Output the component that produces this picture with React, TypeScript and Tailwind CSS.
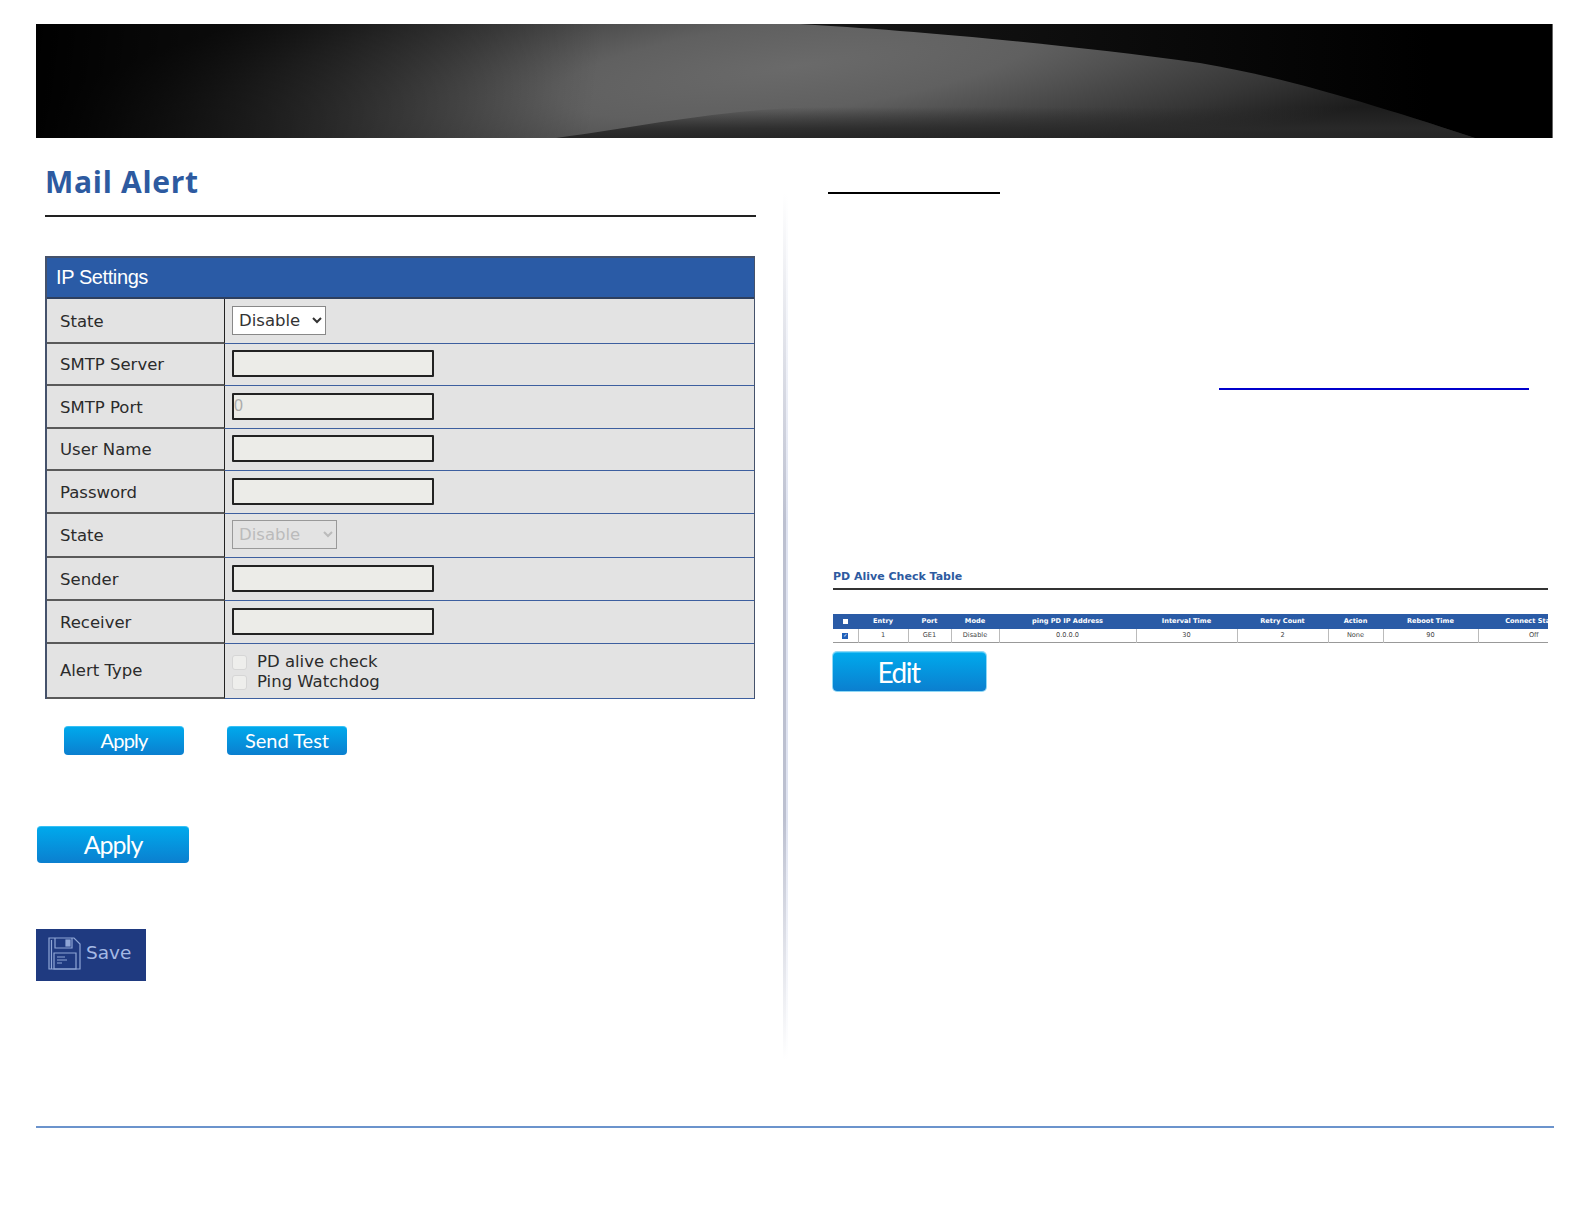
const SANS = "font-['DejaVu_Sans',sans-serif]";

const RULE_ROWS = [
  { label: "State", height: "h-[45px]", kind: "select" },
  { label: "SMTP Server", height: "h-[42px]", kind: "input" },
  { label: "SMTP Port", height: "h-[43px]", kind: "port" },
  { label: "User Name", height: "h-[42px]", kind: "input" },
  { label: "Password", height: "h-[43px]", kind: "input" },
  { label: "State", height: "h-[44px]", kind: "disabled" },
  { label: "Sender", height: "h-[43px]", kind: "input" },
  { label: "Receiver", height: "h-[43px]", kind: "input" },
];

function Banner() {
  return (
    <svg viewBox="0 0 1517 114" className="block h-[114px] w-[1517px]" aria-hidden="true">
      <defs>
        <linearGradient id="base" gradientUnits="userSpaceOnUse" x1="0" x2="1517" y1="0" y2="0">
          <stop offset="0" stopColor="#000" />
          <stop offset="0.12" stopColor="#000" />
          <stop offset="0.5" stopColor="#171717" />
          <stop offset="0.92" stopColor="#000" />
        </linearGradient>
        <radialGradient
          id="glow"
          gradientUnits="userSpaceOnUse"
          cx="0"
          cy="0"
          r="1"
          gradientTransform="translate(760 42) rotate(-7) scale(800 150)"
        >
          <stop offset="0" stopColor="#6a6a6a" />
          <stop offset="0.3" stopColor="#606060" />
          <stop offset="0.55" stopColor="#484848" />
          <stop offset="0.75" stopColor="#363636" />
          <stop offset="0.9" stopColor="#262626" />
          <stop offset="1" stopColor="#1c1c1c" />
        </radialGradient>
        <linearGradient id="shade" gradientUnits="userSpaceOnUse" x1="0" y1="0" x2="560" y2="70">
          <stop offset="0" stopColor="#000" />
          <stop offset="0.2" stopColor="#000" stopOpacity="0.75" />
          <stop offset="0.6" stopColor="#000" stopOpacity="0.35" />
          <stop offset="1" stopColor="#000" stopOpacity="0" />
        </linearGradient>
        <linearGradient id="band" x1="0" x2="0" y1="0" y2="1">
          <stop offset="0" stopColor="#2a2a2a" stopOpacity="0" />
          <stop offset="0.7" stopColor="#2a2a2a" stopOpacity="0.9" />
          <stop offset="1" stopColor="#262626" />
        </linearGradient>
        <clipPath id="frame">
          <rect width="1517" height="114" />
        </clipPath>
        <clipPath id="sweep">
          <path d="M0 0 L764 0 C864 6 1014 18 1164 39 C1240 52 1314 73 1439 114 L0 114 Z" />
        </clipPath>
      </defs>
      <g clipPath="url(#frame)">
        <rect width="1517" height="114" fill="url(#base)" />
        <g clipPath="url(#sweep)">
          <rect width="1517" height="114" fill="url(#glow)" />
          <rect width="600" height="114" fill="url(#shade)" />
          <path d="M520 114 C610 102 680 86 780 83 L1500 83 L1500 114 Z" fill="url(#band)" />
        </g>
        <rect x="1516" width="1" height="114" fill="#666" />
      </g>
    </svg>
  );
}

function BlueButton({ label, size }: { label: string; size: string }) {
  return (
    <button
      className={`flex items-center justify-center rounded-[4px] border-t border-[#35c0f5] bg-gradient-to-b from-[#00a9ec] to-[#0b7fcf] font-['Lato',sans-serif] text-white ${size}`}
    >
      {label}
    </button>
  );
}

function Field({ kind }: { kind: string }) {
  if (kind === "select") {
    return (
      <select className={`${SANS} h-[29px] w-[94px] border border-[#888] bg-white pl-[2px] text-[16.5px] text-[#333]`}>
        <option>Disable</option>
      </select>
    );
  }
  if (kind === "disabled") {
    return (
      <select disabled className={`${SANS} h-[29px] w-[105px] border border-[#999] bg-[#e3e3e3] pl-[2px] text-[16.5px] text-[#bbb]`}>
        <option>Disable</option>
      </select>
    );
  }
  return (
    <input
      readOnly
      value={kind === "port" ? "0" : ""}
      className="h-[27px] w-[202px] rounded-[1px] border-2 border-[#222] bg-[#ecece8] px-0 font-['Liberation_Sans',sans-serif] text-[16px] text-[#aaa]"
    />
  );
}

function SettingsTable() {
  return (
    <div className={`${SANS} ml-[9px] mt-[39px] w-[710px] border-l-2 border-r border-t-2 border-[#45526b] text-[16.5px] text-[#2b2b2b]`}>
      <div className="flex h-[41px] items-center border-b-2 border-[#2d3f5f] bg-[#2a5ba6] pb-[2px] pl-[9px] font-['Liberation_Sans',sans-serif] text-[20px] tracking-[-0.4px] text-white">
        IP Settings
      </div>
      {RULE_ROWS.map((row, i) => (
        <div key={i} className={`flex bg-[#e3e3e3] ${row.height}`}>
          <div className="flex w-[178px] items-center border-b-2 border-r border-[#5a5a5a] border-r-[#222] pl-[13px] pt-[3px]">{row.label}</div>
          <div className="flex flex-1 items-center border-b border-[#3d5f9f] pb-[2px] pl-[7px]">
            <Field kind={row.kind} />
          </div>
        </div>
      ))}
      <div className="flex h-[55px] bg-[#e3e3e3]">
        <div className="flex w-[178px] items-center border-b-2 border-r border-[#5a5a5a] border-r-[#222] pl-[13px] pt-[2px]">Alert Type</div>
        <div className="flex flex-1 flex-col justify-center gap-[3px] border-b border-[#3d5f9f] pl-[7px] pt-[2px]">
          <label className="flex h-[17px] items-center gap-[10px]">
            <span className="h-[15px] w-[15px] rounded-[3px] border border-[#d6d6d6] bg-[#eeeeec]" />
            PD alive check
          </label>
          <label className="flex h-[17px] items-center gap-[10px]">
            <span className="h-[15px] w-[15px] rounded-[3px] border border-[#d6d6d6] bg-[#eeeeec]" />
            Ping Watchdog
          </label>
        </div>
      </div>
    </div>
  );
}

function SaveIcon() {
  return (
    <svg viewBox="0 0 33 33" className="h-[33px] w-[33px]" fill="none" stroke="#8fa6d6" strokeWidth="1.2" aria-hidden="true">
      <path d="M1 1 H26 L32 7 V32 H1 Z" />
      <path d="M3.5 3 V32 M7 1 V11 H24 V1" />
      <rect x="18" y="3" width="4" height="6" fill="#8fa6d6" />
      <path d="M6 16 H28 V32 H6 Z" />
      <path d="M9 20 H17 M9 23 H19 M9 26 H14" />
    </svg>
  );
}

const PD_COLUMNS = [
  { head: "", cell: "", width: "w-[25px]" },
  { head: "Entry", cell: "1", width: "w-[50px]" },
  { head: "Port", cell: "GE1", width: "w-[43px]" },
  { head: "Mode", cell: "Disable", width: "w-[48px]" },
  { head: "ping PD IP Address", cell: "0.0.0.0", width: "w-[137px]" },
  { head: "Interval Time", cell: "30", width: "w-[101px]" },
  { head: "Retry Count", cell: "2", width: "w-[91px]" },
  { head: "Action", cell: "None", width: "w-[55px]" },
  { head: "Reboot Time", cell: "90", width: "w-[95px]" },
  { head: "Connect Status", cell: "Off", width: "w-[111px]" },
];

function AliveTable() {
  return (
    <div className="mt-6 w-[715px] overflow-hidden">
      <table className={`${SANS} w-[756px] table-fixed border-collapse text-center text-[6.6px]`}>
        <colgroup>
          {PD_COLUMNS.map((col, i) => (
            <col key={i} className={col.width} />
          ))}
        </colgroup>
        <thead>
          <tr className="h-[15px] bg-[#2a5ba6] font-bold text-white">
            {PD_COLUMNS.map((col, i) => (
              <th key={i} className="whitespace-nowrap p-0">
                {i === 0 ? <span className="mx-auto block h-[5px] w-[5px] bg-white" /> : col.head}
              </th>
            ))}
          </tr>
        </thead>
        <tbody>
          <tr className="h-[13px] border-b border-[#999] text-[#444]">
            {PD_COLUMNS.map((col, i) => (
              <td key={i} className="border-r border-[#bbb] p-0 pt-px last:border-r-0">
                {i === 0 ? (
                  <span className="mx-auto flex h-[6px] w-[6px] items-center justify-center bg-[#1f5fb8] text-[5px] leading-none text-white">✓</span>
                ) : (
                  col.cell
                )}
              </td>
            ))}
          </tr>
        </tbody>
      </table>
    </div>
  );
}

export default function App() {
  return (
    <div className="h-[1224px] w-[1584px] overflow-hidden bg-white pl-9 pt-6">
      <Banner />
      <div className="flex h-[988px]">
        <div className="w-[720px]">
          <h1 className="ml-[9px] mt-[24px] h-[55px] border-b-2 border-[#222] pt-[2px] font-['Open_Sans',sans-serif] text-[30px] font-bold leading-[36px] tracking-[0.7px] text-[#2d5aa0]">
            Mail Alert
          </h1>
          <SettingsTable />
          <div className="ml-[28px] mt-[27px] flex gap-[43px]">
            <BlueButton label="Apply" size="h-[29px] w-[120px] pb-[2px] text-[20px] tracking-[-0.8px]" />
            <BlueButton label="Send Test" size="h-[29px] w-[120px] pb-[2px] text-[20px]" />
          </div>
          <div className="ml-px mt-[71px]">
            <BlueButton label="Apply" size="h-[37px] w-[152px] text-[25px] tracking-[-1px]" />
          </div>
          <div className={`${SANS} mt-[66px] flex h-[52px] w-[110px] items-center gap-[5px] bg-[#1f3a80] pb-1 pl-3 text-[18.5px] text-[#a5b9e4]`}>
            <SaveIcon />
            Save
          </div>
        </div>
        <div className="ml-[27px] mt-[55px] flex h-[867px]">
          <div className="w-[3px] bg-[linear-gradient(to_bottom,#fff,#bcc0d0_38%,#bcc0d0_72%,#fff)]" />
          <div className="w-[2px] bg-[linear-gradient(to_bottom,#fff,#dfe3f0_38%,#dfe3f0_72%,#fff)]" />
        </div>
        <div className="ml-[40px] w-[720px]">
          <div className="mt-[54px] h-[2px] w-[172px] bg-black" />
          <div className="ml-[391px] mt-[194px] h-[2px] w-[310px] bg-[#0000cc]" />
          <h2 className={`${SANS} ml-[5px] mt-[180px] border-b-2 border-[#333] pb-[4px] text-[11px] font-bold leading-[14px] text-[#2d5aa0]`}>
            PD Alive Check Table
          </h2>
          <div className="ml-[5px]">
            <AliveTable />
            <div className="mt-[9px]">
              <BlueButton label="Edit" size="h-[39px] w-[153px] pr-[22px] text-[28px] tracking-[-1.5px] ring-1 ring-[#8fd8f5]" />
            </div>
          </div>
        </div>
      </div>
      <div className="h-[2px] w-[1518px] bg-[#6b93cc]" />
    </div>
  );
}
